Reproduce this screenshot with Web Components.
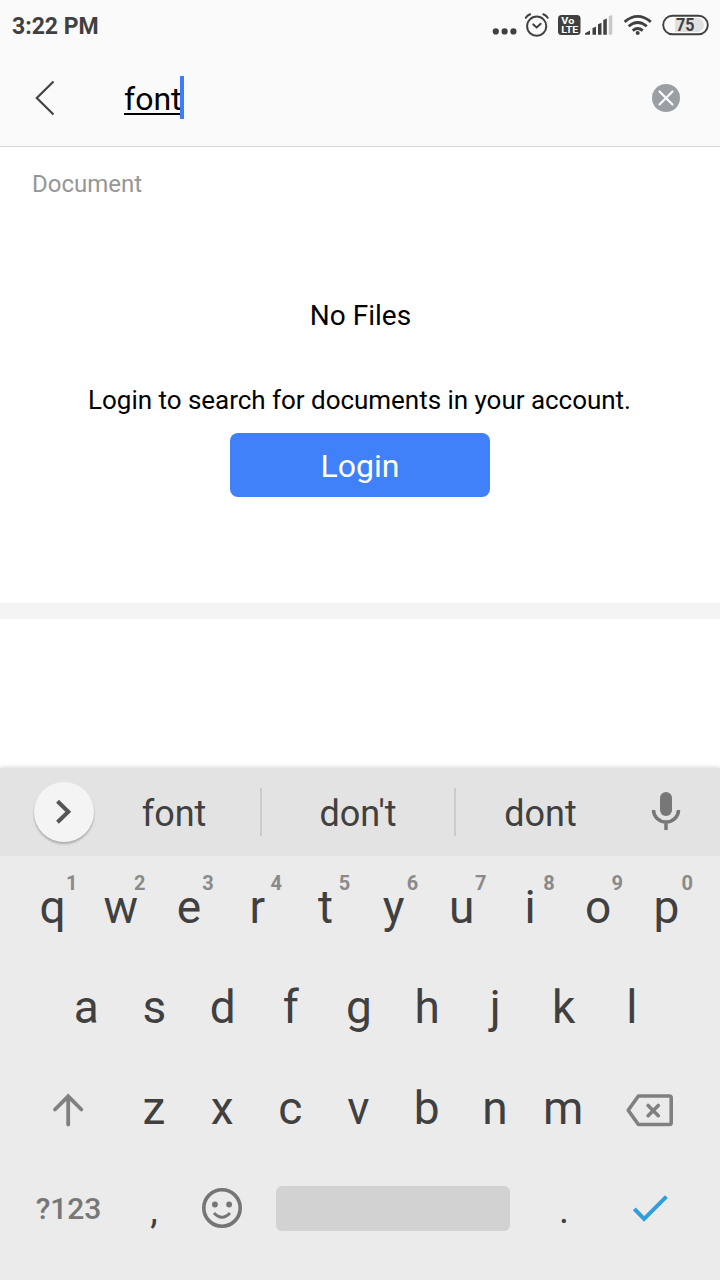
<!DOCTYPE html>
<html lang="en">
<head>
<meta charset="utf-8">
<title>Search</title>
<style>
html,body{margin:0;padding:0}
body{width:720px;height:1280px;overflow:hidden;background:#fff;font-family:Roboto,"Liberation Sans",sans-serif;color:#000}
</style>
</head>
<body>
<search-screen></search-screen>
<script>
const define = (name, html, setup) => {
  const tpl = document.createElement('template');
  tpl.innerHTML = html;
  customElements.define(name, class extends HTMLElement {
    constructor() {
      super();
      this.attachShadow({ mode: 'open' }).append(tpl.content.cloneNode(true));
    }
    connectedCallback() { if (setup) setup(this, this.shadowRoot); }
  });
};

define('status-bar', `
<style>
:host{display:flex;align-items:center;justify-content:space-between;height:50px;padding-left:12px;color:#404040}
.time{font-size:23px;font-weight:700;line-height:54px;height:50px}
.icons{display:flex}
svg{display:block}
text{font-weight:700;font-family:inherit}
</style>
<div class="time">3:22 PM</div>
<div class="icons">
<svg width="31" height="50" viewBox="490 0 31 50" fill="#404040"><circle cx="495.8" cy="31.4" r="3.1"/><circle cx="504.6" cy="31.4" r="3.1"/><circle cx="513.4" cy="31.4" r="3.1"/></svg>
<svg width="32" height="50" viewBox="521 0 32 50" fill="none" stroke="#404040" stroke-width="2" stroke-linecap="round"><circle cx="536.7" cy="26.2" r="9.6"/><path d="M533.3 24.4l3.4 3 4-3.6M525.8 17.8q1.5-2.6 4.4-3.6M543.3 14.2q2.900 1 4.400 3.600"/></svg>
<svg width="30" height="50" viewBox="553 0 30 50"><rect x="558" y="15" width="22.500" height="20" rx="3.500" fill="#404040"/><text x="561.300" y="23.800" font-size="9.500" textLength="13" lengthAdjust="spacingAndGlyphs" fill="#fff">Vo</text><text x="561.300" y="32.900" font-size="9.500" textLength="17" lengthAdjust="spacingAndGlyphs" fill="#fff">LTE</text></svg>
<svg width="35" height="50" viewBox="583 0 35 50" fill="#404040"><path d="M585 34.700v-1.500l5-2.600v4.100zM592.500 34.700v-6.700l3.500-1.200v7.900zM598 34.700V24.200l3.500-1.400v11.900zM603.300 34.700V20l3.500-1.400v16.100z"/><path d="M608.800 34.700V16.300l3.500-1.400v19.800z" fill="#c8c8c8"/></svg>
<svg width="40" height="50" viewBox="618 0 40 50" fill="none" stroke="#404040" stroke-width="2.800"><path d="M624.600 21.800Q637.700 11 650.800 21.800M628.600 26.300Q637.700 18.600 646.800 26.300M632.700 30.600Q637.700 26.400 642.700 30.600"/><circle cx="637.700" cy="33" r="2" fill="#404040" stroke="none"/></svg>
<svg width="62" height="50" viewBox="658 0 62 50"><rect x="663.200" y="15.700" width="44.600" height="18.600" rx="9.300" fill="none" stroke="#404040" stroke-width="1.900"/><path d="M675 18h22a7 7 0 0 1 0 14h-22z" fill="#e0e0e0"/><text x="676" y="31.200" font-size="18" textLength="18.500" lengthAdjust="spacingAndGlyphs" fill="#404040">75</text></svg>
</div>`);

define('search-bar', `
<style>
:host{display:grid;grid-template-columns:124px 1fr 108px;align-items:center;height:96px;border-bottom:1px solid #d6d6d6}
svg{display:block}
.field{display:flex;align-items:center}
.value{font-size:32px;line-height:36px;height:32px;border-bottom:2px solid #000}
.caret{width:4px;height:43px;background:#3e7df5;margin:-1px 0 0 -2px}
</style>
<svg width="124" height="96" viewBox="0 50 124 96" fill="none" stroke="#444" stroke-width="2.200"><path d="M53.500 81.500L36.800 98l16.700 16.500"/></svg>
<div class="field"><span class="value"><slot></slot></span><span class="caret"></span></div>
<svg width="108" height="96" viewBox="612 50 108 96"><circle cx="666" cy="98" r="14" fill="#999fa3"/><path d="M659.500 91.500l13 13m0-13l-13 13" stroke="#fff" stroke-width="2.200" stroke-linecap="round"/></svg>`);

define('login-button', `
<style>
:host{display:block}
button{display:block;width:260px;height:64px;border:0;border-radius:8px;background:#4080f8;color:#fff;font:400 32px/66px Roboto,"Liberation Sans",sans-serif;padding:0;text-align:center}
</style><button><slot></slot></button>`);

define('document-results', `
<style>
:host{display:flex;flex-direction:column;align-items:center;height:456px;border-bottom:16px solid #f4f4f4}
.label{align-self:stretch;padding-left:32px;font-size:24px;line-height:30px;margin-top:22px;color:#969696}
.empty{font-size:28px;line-height:34px;margin-top:100px;padding-left:1px}
.hint{font-size:26px;line-height:32px;margin:51px 0 17px;letter-spacing:-.03px;padding-right:1px}
</style>
<div class="label">Document</div>
<div class="empty">No Files</div>
<div class="hint">Login to search for documents in your account.</div>
<login-button>Login</login-button>`);

define('suggestion-strip', `
<style>
:host{display:grid;grid-template-columns:88px 172px 195px 157px 108px;grid-template-rows:88px;height:88px;background:#e3e3e3;align-items:center;color:#404040}
.word{font-size:36px;height:88px;line-height:92px;text-align:center}
.mid{height:48px;line-height:52px;border:solid #cbcbcb;border-width:0 2px;box-sizing:border-box;width:196px}
.last{padding-left:14px}
svg{display:block}
</style>
<svg width="100" height="88" viewBox="0 768 100 88"><defs><filter id="s" x="-20%" y="-20%" width="140%" height="150%"><feGaussianBlur stdDeviation="1.200"/></filter></defs><circle cx="64" cy="814" r="30" fill="#000" opacity=".25" filter="url(#s)"/><circle cx="64" cy="812" r="30" fill="#f4f4f4"/><path d="M57.500 801.200l10.800 10.500-10.800 10.500" fill="none" stroke="#555" stroke-width="4"/></svg>
<div class="word">font</div><div class="word mid">don't</div><div class="word last">dont</div>
<svg width="108" height="88" viewBox="612 768 108 88"><rect x="660" y="792" width="12" height="24" rx="6" fill="#777"/><path d="M653.500 810a12.500 12 0 0 0 25 0M666 822v8" fill="none" stroke="#777" stroke-width="3.500"/></svg>`);

define('letter-key', `
<style>
:host{display:block;position:relative;text-align:center;font-size:46px;height:101px;color:#404040}
.alt{position:absolute;left:calc(50% + 19px);top:17px;transform:translateX(-50%);font-size:20px;line-height:20px;font-weight:700;color:#8a8a8a}
:host(:last-child) .alt{left:calc(50% + 21px)}
</style><slot></slot><span class="alt"></span>`, (el, root) => {
  const alt = root.querySelector('.alt');
  if (el.hasAttribute('alt')) alt.textContent = el.getAttribute('alt'); else alt.remove();
});

define('key-row', `
<style>
:host{display:flex;height:101px;justify-content:center;line-height:101px}
::slotted(letter-key){width:68.200px}
</style><slot></slot>`);

define('soft-keyboard', `
<style>
:host{display:block;height:512px;background:#ebebeb;box-shadow:0 -1px 4px rgba(0,0,0,.15)}
svg{display:block;flex:none;overflow:visible}
.bottom{display:grid;grid-template-columns:34px 68px 104px 70px 234px 108px 102px;height:101px;align-items:center}
.sym{font-size:30px;font-weight:500;line-height:99px;height:101px;color:#777;grid-column:2;display:flex;justify-content:center;padding-left:1px}
.punct{font-size:38px;line-height:103px;height:101px;text-align:center;color:#404040}
.space{height:45px;border-radius:6px;background:#d2d2d2;margin-top:-2px}
.r1{margin-left:-1px;line-height:102px}
.r2{margin-left:-2px}
.r3{margin-left:-3px}
</style>
<suggestion-strip></suggestion-strip>
<key-row class="r1"></key-row>
<key-row class="r2"></key-row>
<key-row class="r3"></key-row>
<div class="bottom">
<span class="sym">?123</span>
<span class="punct">,</span>
<svg width="70" height="101" viewBox="206 1158.500 70 101"><circle cx="222" cy="1207.500" r="18.200" fill="none" stroke="#757575" stroke-width="3.600"/><circle cx="214.900" cy="1204" r="2.900" fill="#757575"/><circle cx="229.100" cy="1204" r="2.900" fill="#757575"/><path d="M214 1212.500q8 8.500 16 0" fill="none" stroke="#757575" stroke-width="3"/></svg>
<span class="space"></span>
<span class="punct">.</span>
<svg width="102" height="101" viewBox="618 1159 102 101" fill="none" stroke="#2f9fdb" stroke-width="4"><path d="M634.300 1208.800l9.800 10.200 22.300-22.300"/></svg>
</div>`, (el, root) => {
  const fill = (sel, letters, alts = '') => {
    const row = root.querySelector(sel);
    [...letters].forEach((c, i) => {
      const key = document.createElement('letter-key');
      key.textContent = c;
      if (alts[i]) key.setAttribute('alt', alts[i]);
      row.append(key);
    });
    return row;
  };
  fill('.r1', 'qwertyuiop', '1234567890');
  fill('.r2', 'asdfghjkl');
  const r3 = fill('.r3', 'zxcvbnm');
  r3.insertAdjacentHTML('afterbegin', '<svg width="102" height="101" viewBox="17.800 1058 102 101" fill="none" stroke="#808080" stroke-width="3.800" stroke-linecap="round"><path d="M68 1124.500V1096.500M54.800 1109.500L68 1096.300l13.200 13.200"/></svg>');
  r3.insertAdjacentHTML('beforeend', '<svg width="102" height="101" viewBox="597.100 1058 102 101" fill="none" stroke="#808080" stroke-width="3.600" stroke-linejoin="round" stroke-linecap="round"><path d="M638.500 1096H669.500q1.800 0 1.800 1.800V1122.700q0 1.800-1.800 1.800H638.500L628.300 1110.300zM648.200 1105.500l10.200 10.200m0-10.200l-10.200 10.200"/></svg>');
});

define('search-screen', `
<style>
:host{display:flex;flex-direction:column;width:720px;height:1280px;background:#fff}
header{background:#fafafa}
soft-keyboard{margin-top:auto}
</style>
<header><status-bar></status-bar><search-bar>font</search-bar></header>
<document-results></document-results>
<soft-keyboard></soft-keyboard>`);
</script>
</body>
</html>
